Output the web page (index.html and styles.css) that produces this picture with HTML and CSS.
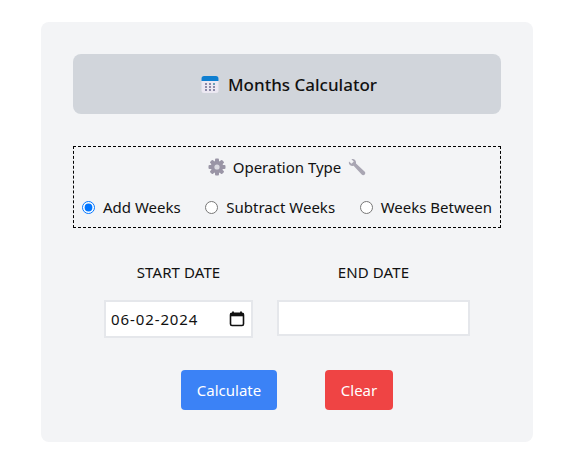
FILE: index.html
```html
<!DOCTYPE html>
<html lang="en">
<head>
    <meta charset="UTF-8">
    <meta name="viewport" content="width=device-width, initial-scale=1.0">
    <title>Months Calculator</title>
    <link rel="stylesheet" href="styles.css">
</head>
<body>
    <div class="container">
        <h2 class="title">
            <svg class="title-icon" width="18" height="18" viewBox="0 0 18 18">
                <rect x="0.5" y="1" width="17" height="17" rx="2.5" fill="#ece8f2"/>
                <path d="M0.5 6V3.5A2.5 2.5 0 0 1 3 1H15A2.5 2.500 0 0 1 17.5 3.500V6Z" fill="#0f7fd0"/>
                <g fill="#8d8aa6">
                    <rect x="4" y="8" width="2" height="2"/><rect x="8" y="8" width="2" height="2"/><rect x="12" y="8" width="2" height="2" fill="#6a9fb8"/>
                    <rect x="4" y="11" width="2" height="2"/><rect x="8" y="11" width="2" height="2"/><rect x="12" y="11" width="2" height="2"/>
                    <rect x="4" y="14" width="2" height="2"/><rect x="8" y="14" width="2" height="2"/><rect x="12" y="14" width="2" height="2"/>
                </g>
            </svg>
            Months Calculator
        </h2>

        <div class="operation">
            <div class="operation-title">
                <svg width="18" height="18" viewBox="0 0 18 18">
                    <g fill="#9a95a6">
                        <rect x="7" y="0.500" width="4" height="17" rx="1"/>
                        <rect x="7" y="0.500" width="4" height="17" rx="1" transform="rotate(45 9 9)"/>
                        <rect x="7" y="0.500" width="4" height="17" rx="1" transform="rotate(90 9 9)"/>
                        <rect x="7" y="0.500" width="4" height="17" rx="1" transform="rotate(135 9 9)"/>
                        <circle cx="9" cy="9" r="6.200"/>
                    </g>
                    <circle cx="9" cy="9" r="2.600" fill="#dcdbe2"/>
                </svg>
                <span>Operation Type</span>
                <svg width="18" height="18" viewBox="0 0 18 18">
                    <path d="M1 3.500L3.500 5.800L5.800 3.600L3.400 1.200C5.500 0.300 8 1.600 8 4.200L8 5.500L16.800 13.800C17.600 14.700 17.400 16 16.500 16.800C15.600 17.500 14.400 17.300 13.700 16.500L5.600 7.800L4.200 7.900C2 7.900 0.400 5.800 1 3.500Z" fill="#a9a6b3"/>
                </svg>
            </div>
            <div class="radio-row">
                <label><input type="radio" name="op" checked> Add Weeks</label>
                <label><input type="radio" name="op"> Subtract Weeks</label>
                <label><input type="radio" name="op"> Weeks Between</label>
            </div>
        </div>

        <div class="dates">
            <div class="date-col start">
                <label class="date-label">START DATE</label>
                <div class="date-box">
                    <span class="date-value">06-02-2024</span>
                    <svg width="16" height="16" viewBox="0 0 16 16">
                        <path d="M4 0.500V2.500M12 0.500V2.500" stroke="#111" stroke-width="1.800" fill="none"/>
                        <rect x="1.500" y="2.300" width="13" height="12.200" rx="1.500" stroke="#111" stroke-width="1.600" fill="none"/>
                        <rect x="1.500" y="2.300" width="13" height="3" fill="#111"/>
                    </svg>
                </div>
            </div>
            <div class="date-col end">
                <label class="date-label">END DATE</label>
                <input class="end-input" type="text">
            </div>
        </div>

        <div class="buttons">
            <button class="btn btn-blue">Calculate</button>
            <button class="btn btn-red">Clear</button>
        </div>
    </div>
</body>
</html>
```
FILE: styles.css
```css
body {
    background-color: white;
    font-family: "Noto Sans", "Open Sans", sans-serif;
    margin: 0;
    color: #111;
}
.container {
    background: #f3f4f6;
    border-radius: 8px;
    width: 492px;
    height: 420px;
    box-sizing: border-box;
    margin: 22px auto 0;
    padding: 32px;
}
.title {
    background: #d1d5db;
    border-radius: 8px;
    height: 60px;
    margin: 0;
    padding-left: 4px;
    display: flex;
    justify-content: center;
    align-items: center;
    gap: 9px;
    font-size: 17px;
    font-weight: 500;
}
.operation {
    border: 1px dashed black;
    margin-top: 32px;
    height: 82px;
    box-sizing: border-box;
    font-size: 15px;
}
.operation-title {
    display: flex;
    justify-content: center;
    align-items: center;
    gap: 7px;
    height: 18px;
    margin-top: 11px;
}
.radio-row {
    display: flex;
    justify-content: space-between;
    margin-top: 21px;
    padding: 0 8px;
}
.radio-row label {
    display: flex;
    align-items: center;
    gap: 8px;
    white-space: nowrap;
}
.radio-row input {
    width: 13px;
    height: 13px;
    margin: 0;
}
.dates {
    display: flex;
    margin-top: 34px;
    padding-left: 31px;
    gap: 24px;
}
.date-col {
    display: flex;
    flex-direction: column;
    align-items: center;
}
.date-col.start {
    width: 149px;
}
.date-col.end {
    width: 193px;
}
.date-label {
    font-size: 15px;
    letter-spacing: 0.1px;
    line-height: 20px;
    margin-bottom: 18px;
}
.date-box {
    width: 149px;
    height: 38px;
    box-sizing: border-box;
    background: white;
    border: 2px solid #e5e7eb;
    display: flex;
    align-items: center;
    justify-content: space-between;
    padding: 0 6px 0 5px;
    font-size: 15px;
    letter-spacing: 0.9px;
}
.end-input {
    width: 193px;
    height: 36px;
    box-sizing: border-box;
    background: white;
    border: 2px solid #e5e7eb;
    outline: none;
}
.buttons {
    display: flex;
    justify-content: center;
    gap: 48px;
    margin-top: 32px;
}
.btn {
    color: white;
    border: none;
    height: 40px;
    border-radius: 4px;
    font-family: inherit;
    font-size: 15px;
    padding: 0;
}
.btn-blue {
    background-color: #3b82f6;
    width: 96px;
}
.btn-red {
    background-color: #ef4444;
    width: 68px;
}
```
